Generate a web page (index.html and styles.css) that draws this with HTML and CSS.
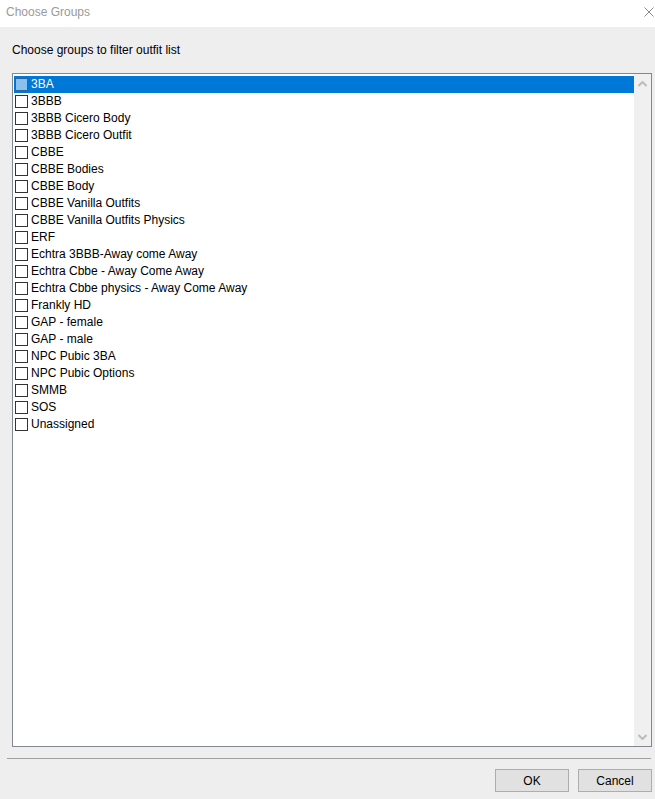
FILE: index.html
```html
<!DOCTYPE html>
<html>
<head>
	<title>Choose Groups</title>
	<link rel="stylesheet" href="styles.css">
</head>
<body>
	<div class="dialog">
		<div class="titlebar">
			<span class="title">Choose Groups</span>
			<svg class="close" width="10" height="10" viewBox="0 0 10 10">
				<path d="M0.5 0.5 L9.5 9.5 M9.5 0.5 L0.5 9.5" stroke="#8a8a8a" stroke-width="1" fill="none"/>
			</svg>
		</div>

		<div class="client">
			<p class="prompt">Choose groups to filter outfit list</p>

			<div class="listbox">
				<ul class="items">
					<li class="item selected"><span class="check"></span>3BA</li>
					<li class="item"><span class="check"></span>3BBB</li>
					<li class="item"><span class="check"></span>3BBB Cicero Body</li>
					<li class="item"><span class="check"></span>3BBB Cicero Outfit</li>
					<li class="item"><span class="check"></span>CBBE</li>
					<li class="item"><span class="check"></span>CBBE Bodies</li>
					<li class="item"><span class="check"></span>CBBE Body</li>
					<li class="item"><span class="check"></span>CBBE Vanilla Outfits</li>
					<li class="item"><span class="check"></span>CBBE Vanilla Outfits Physics</li>
					<li class="item"><span class="check"></span>ERF</li>
					<li class="item"><span class="check"></span>Echtra 3BBB-Away come Away</li>
					<li class="item"><span class="check"></span>Echtra Cbbe - Away Come Away</li>
					<li class="item"><span class="check"></span>Echtra Cbbe physics - Away Come Away</li>
					<li class="item"><span class="check"></span>Frankly HD</li>
					<li class="item"><span class="check"></span>GAP - female</li>
					<li class="item"><span class="check"></span>GAP - male</li>
					<li class="item"><span class="check"></span>NPC Pubic 3BA</li>
					<li class="item"><span class="check"></span>NPC Pubic Options</li>
					<li class="item"><span class="check"></span>SMMB</li>
					<li class="item"><span class="check"></span>SOS</li>
					<li class="item"><span class="check"></span>Unassigned</li>
				</ul>
				<div class="scrollbar">
					<div class="arrow">
						<svg width="9" height="6" viewBox="0 0 9 6"><path d="M0.5 5 L4.5 1 L8.5 5" stroke="#bcbcbc" stroke-width="2" fill="none"/></svg>
					</div>
					<div class="arrow">
						<svg width="9" height="6" viewBox="0 0 9 6"><path d="M0.5 1 L4.5 5 L8.5 1" stroke="#bcbcbc" stroke-width="2" fill="none"/></svg>
					</div>
				</div>
			</div>

			<div class="separator"></div>

			<div class="buttons">
				<button type="button">OK</button>
				<button type="button">Cancel</button>
			</div>
		</div>
	</div>
</body>
</html>
```

FILE: styles.css
```css
body {
	margin: 0;
	padding: 0;
	font-family: 'Liberation Sans', Arial, sans-serif;
	font-size: 12px;
	color: black;
	background-color: #eeeeee;
}
.dialog {
	width: 655px;
	height: 799px;
	overflow: hidden;
}
.titlebar {
	display: flex;
	align-items: center;
	justify-content: space-between;
	height: 27px;
	padding: 0 1px 4px 6px;
	box-sizing: border-box;
	background-color: white;
}
.title {
	color: #9a9a9a;
}
.client {
	padding-top: 15px;
	background-color: #eeeeee;
}
.prompt {
	margin: 0 0 0 12px;
	height: 16px;
	line-height: 16px;
}
.listbox {
	display: flex;
	margin: 15px 3px 0 12px;
	height: 674px;
	box-sizing: border-box;
	border: solid 1px #828790;
	background-color: white;
}
.items {
	flex: 1;
	margin: 0;
	padding: 2px 0 0 1px;
	list-style: none;
}
.item {
	display: flex;
	align-items: center;
	height: 17px;
	line-height: 17px;
	white-space: nowrap;
}
.check {
	width: 13px;
	height: 13px;
	margin: 0 3px 0 1px;
	box-sizing: border-box;
	border: solid 1px #333333;
	background-color: white;
}
.item.selected {
	color: white;
	background-color: #0078d7;
}
.item.selected .check {
	border-color: #2b64a0;
	background-color: #8ac0ee;
}
.scrollbar {
	display: flex;
	flex-direction: column;
	justify-content: space-between;
	width: 17px;
	padding: 1px 0;
	background-color: #f0f0f0;
}
.arrow {
	display: flex;
	align-items: center;
	justify-content: center;
	height: 17px;
}
.separator {
	margin: 11px 4px 0 7px;
	height: 1px;
	background-color: #a0a0a0;
}
.buttons {
	display: flex;
	justify-content: flex-end;
	gap: 9px;
	margin-top: 10px;
	padding-right: 3px;
}
button {
	width: 74px;
	height: 23px;
	padding: 0;
	font-family: inherit;
	font-size: 12px;
	color: black;
	background-color: #e1e1e1;
	border: solid 1px #adadad;
	border-radius: 0;
	-webkit-appearance: none;
	appearance: none;
}
```
